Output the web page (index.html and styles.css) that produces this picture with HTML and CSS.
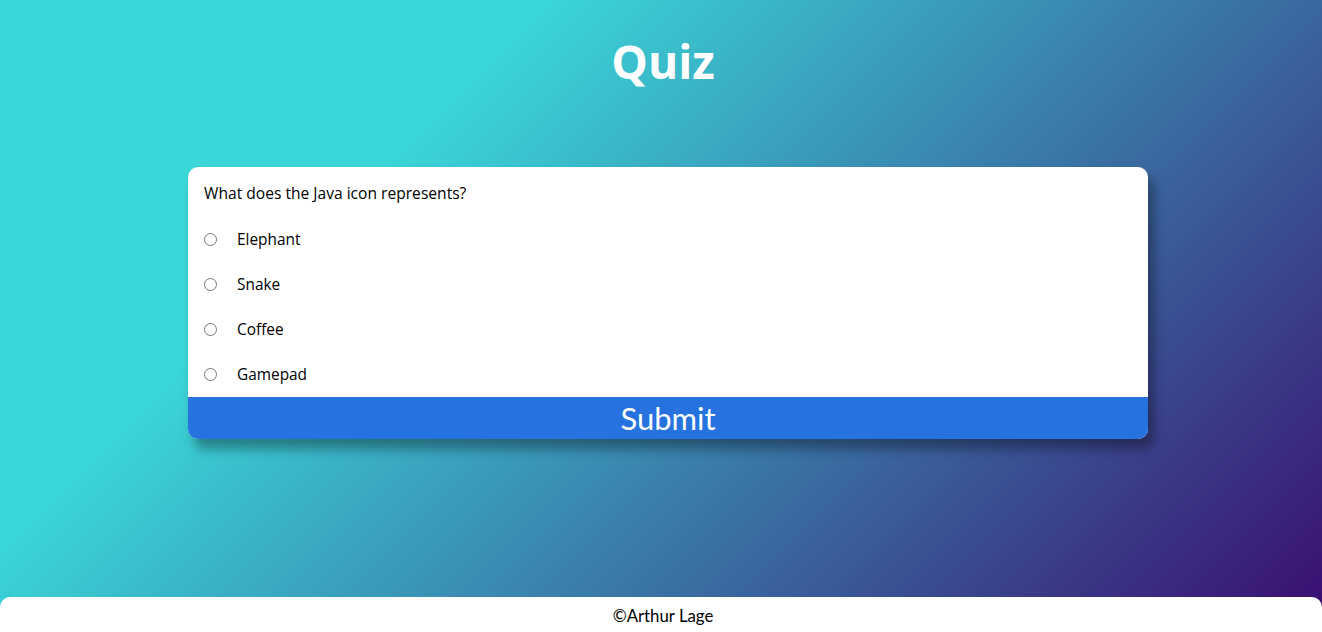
FILE: index.html
```html
<!DOCTYPE html>
<html lang="en">
<head>
<meta charset="UTF-8">
<title>Quiz</title>
<link rel="stylesheet" href="styles.css">
</head>
<body>
<main class="page">
  <h1 class="title">Quiz</h1>
  <div class="quiz">
    <div class="quiz-body">
      <h2 class="question">What does the Java icon represents?</h2>
      <ul class="answers">
        <li class="answer"><input type="radio" name="answer" id="a"><label for="a">Elephant</label></li>
        <li class="answer"><input type="radio" name="answer" id="b"><label for="b">Snake</label></li>
        <li class="answer"><input type="radio" name="answer" id="c"><label for="c">Coffee</label></li>
        <li class="answer"><input type="radio" name="answer" id="d"><label for="d">Gamepad</label></li>
      </ul>
    </div>
    <button class="submit">Submit</button>
  </div>
</main>
<footer class="footer">©Arthur Lage</footer>
</body>
</html>
```
FILE: styles.css
```css
* { box-sizing: border-box; }
html, body { height: 100%; }
body {
  margin: 0;
  min-height: 100vh;
  display: flex;
  flex-direction: column;
  background: linear-gradient(135deg, #3ad6d8 28%, #3a0c70 100%);
  font-family: "Open Sans", "Noto Sans", sans-serif;
}
.page {
  flex: 1;
  display: flex;
  flex-direction: column;
}
.title {
  margin: 27px 0 0 4px;
  text-align: center;
  color: #fff;
  font-size: 46px;
  line-height: 68px;
  font-weight: 700;
}
.quiz {
  width: 960px;
  margin: 72px 0 0 calc(50% - 473px);
  background: #fff;
  border-radius: 10px;
  overflow: hidden;
  box-shadow: 6px 10px 12px rgba(0, 0, 0, 0.35);
}
.quiz-body {
  padding: 16px 16px 0 16px;
}
.question {
  margin: 0 0 14px 0;
  font-size: 15.6px;
  line-height: 20px;
  font-weight: 400;
  color: #000;
}
.answers {
  list-style: none;
  margin: 0;
  padding: 0;
}
.answer {
  height: 45px;
  display: flex;
  align-items: center;
  font-size: 15.4px;
  color: #000;
}
.answer input {
  margin: 0 20px 0 0;
  width: 13px;
  height: 13px;
}
.submit {
  display: block;
  width: 100%;
  height: 42px;
  border: none;
  padding: 0;
  background: #2672de;
  color: #fff;
  font-family: "Lato", "Open Sans", sans-serif;
  font-weight: 400;
  font-size: 31px;
  line-height: 42px;
  cursor: pointer;
}
.footer {
  height: 35px;
  background: #fff;
  border-radius: 10px 10px 0 0;
  display: flex;
  align-items: center;
  justify-content: center;
  padding-left: 4px;
  padding-top: 2px;
  font-family: "Lato", "Open Sans", sans-serif;
  font-size: 16.8px;
  color: #000;
}
```
